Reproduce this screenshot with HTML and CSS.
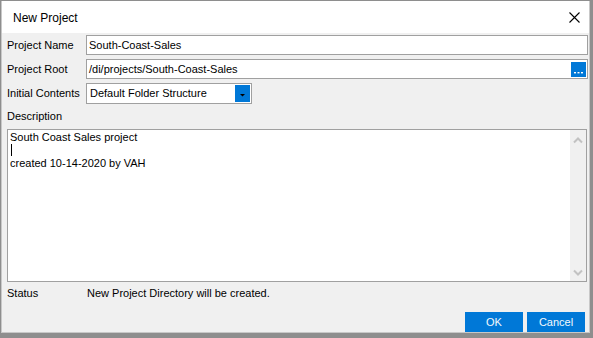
FILE: index.html
```html
<!DOCTYPE html>
<html>
<head>
<meta charset="utf-8">
<link rel="stylesheet" href="styles.css">
</head>
<body>
<div class="frame">
  <div class="dialog">
    <div class="titlebar">
      <span class="title">New Project</span>
      <svg class="close" width="11" height="11" viewBox="0 0 11 11"><path d="M0.5 0.5L10.5 10.5M10.5 0.5L0.5 10.5" stroke="#000" stroke-width="1.1" fill="none"/></svg>
    </div>
    <div class="body">
      <div class="row">
        <span class="label">Project Name</span>
        <div class="field">South-Coast-Sales</div>
      </div>
      <div class="row gap">
        <span class="label">Project Root</span>
        <div class="field browse">
          <span class="grow">/di/projects/South-Coast-Sales</span>
          <span class="dots"><svg width="15" height="15" viewBox="0 0 15 15"><rect x="3" y="10" width="2" height="1.4" fill="#fff"/><rect x="6.5" y="10" width="2" height="1.4" fill="#fff"/><rect x="10" y="10" width="2" height="1.4" fill="#fff"/></svg></span>
        </div>
      </div>
      <div class="row gap">
        <span class="label">Initial Contents</span>
        <div class="combo">
          <span class="grow">Default Folder Structure</span>
          <span class="drop"><svg width="15" height="17" viewBox="0 0 15 17"><path d="M5 9h5l-2.5 2.5z" fill="#000"/></svg></span>
        </div>
      </div>
      <div class="desc-label">Description</div>
      <div class="memo">
        <div class="memo-text">
          <div class="line">South Coast Sales project</div>
          <div class="line"><span class="caret"></span></div>
          <div class="line">created 10-14-2020 by VAH</div>
        </div>
        <div class="vscroll">
          <svg width="16" height="10" viewBox="0 0 16 10"><path d="M4 7.5L8 3.5L12 7.5" stroke="#c2c2c2" stroke-width="2" fill="none"/></svg>
          <svg width="16" height="10" viewBox="0 0 16 10"><path d="M4 2.5L8 6.5L12 2.5" stroke="#c2c2c2" stroke-width="2" fill="none"/></svg>
        </div>
      </div>
      <div class="status">
        <span class="status-label">Status</span>
        <span>New Project Directory will be created.</span>
      </div>
      <div class="actions">
        <button class="btn">OK</button>
        <button class="btn">Cancel</button>
      </div>
    </div>
  </div>
</div>
</body>
</html>
```
FILE: styles.css
```css
html, body {
  margin: 0;
  padding: 0;
}
body {
  width: 593px;
  height: 338px;
  overflow: hidden;
  font-family: "Liberation Sans", Arial, sans-serif;
  font-size: 11px;
  color: #000;
}
.frame {
  box-sizing: border-box;
  width: 593px;
  height: 338px;
  background: #8e8e8e;
  padding: 1px 3px 5px 1px;
}
.dialog {
  box-sizing: border-box;
  height: 100%;
  background: #f0f0f0;
  border: 1px solid #c8c8c8;
  border-top: none;
  display: flex;
  flex-direction: column;
}
.titlebar {
  height: 32px;
  background: #fff;
  display: flex;
  align-items: center;
  padding: 0 9px 0 11px;
}
.title {
  flex: 1;
  font-size: 12px;
  line-height: 16px;
  padding-top: 1px;
}
.close {
  display: block;
  margin-top: 1px;
}
.body {
  padding: 2px 1px 0 5px;
  display: flex;
  flex-direction: column;
}
.row {
  display: flex;
  align-items: center;
}
.row.gap {
  margin-top: 4px;
}
.label {
  width: 79px;
  line-height: 13px;
}
.field {
  box-sizing: border-box;
  flex: 1;
  height: 20px;
  background: #fff;
  border: 1px solid #a0a0a0;
  padding: 0 1px 0 2px;
  display: flex;
  align-items: center;
  line-height: 13px;
}
.grow {
  flex: 1;
}
.dots {
  width: 15px;
  height: 15px;
  background: #0078d7;
  display: block;
}
.dots svg, .drop svg {
  display: block;
}
.combo {
  box-sizing: border-box;
  width: 166px;
  height: 21px;
  background: #fff;
  border: 1px solid #a0a0a0;
  padding: 0 1px 0 3px;
  display: flex;
  align-items: center;
  line-height: 13px;
}
.drop {
  width: 15px;
  height: 17px;
  background: #0078d7;
  display: block;
}
.desc-label {
  margin-top: 6px;
  line-height: 13px;
  height: 13px;
}
.memo {
  box-sizing: border-box;
  margin-top: 6px;
  margin-right: 1px;
  height: 153px;
  background: #fff;
  border: 1px solid #a0a0a0;
  display: flex;
}
.memo-text {
  flex: 1;
  padding: 1px 0 0 2px;
}
.line {
  height: 13px;
  line-height: 13px;
}
.caret {
  display: inline-block;
  width: 1px;
  height: 12px;
  background: #000;
  vertical-align: top;
  margin-left: 1px;
}
.vscroll {
  width: 16px;
  background: #f0f0f0;
  display: flex;
  flex-direction: column;
  justify-content: space-between;
  padding: 5px 0 3px;
}
.vscroll svg {
  display: block;
}
.status {
  margin-top: 5px;
  display: flex;
  line-height: 13px;
}
.status-label {
  width: 80px;
}
.actions {
  margin-top: 12px;
  display: flex;
  justify-content: flex-end;
  gap: 4px;
  padding-right: 3px;
}
.btn {
  box-sizing: border-box;
  width: 58px;
  height: 20px;
  border: none;
  margin: 0;
  padding: 0;
  background: #0078d7;
  color: #f4f8fc;
  font-family: "Liberation Sans", Arial, sans-serif;
  font-size: 11px;
  line-height: 20px;
}
```
